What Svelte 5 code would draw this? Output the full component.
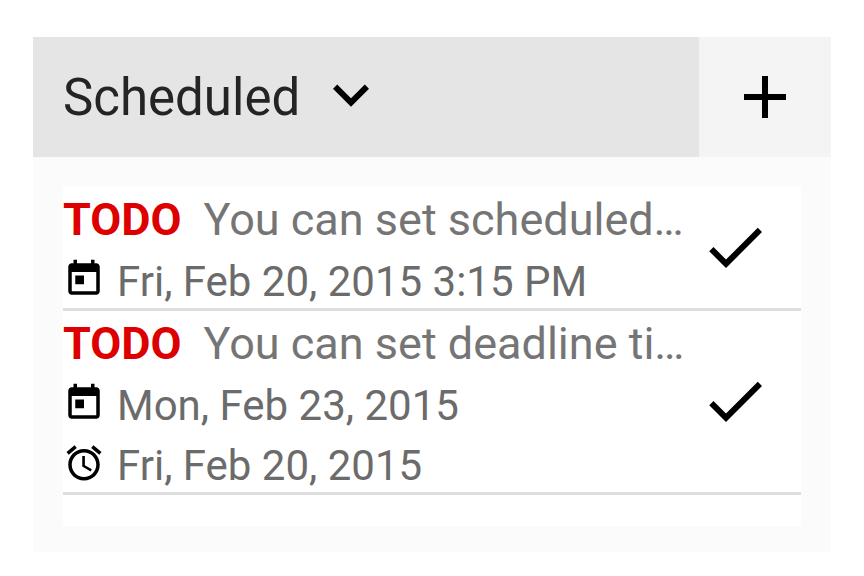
<script>
  const filters = ['Scheduled'];
  let filter = $state(filters[0]);

  const tasks = [
    {
      state: 'TODO',
      title: 'You can set scheduled…',
      times: [{ kind: 'scheduled', text: 'Fri, Feb 20, 2015 3:15 PM' }]
    },
    {
      state: 'TODO',
      title: 'You can set deadline ti…',
      times: [
        { kind: 'scheduled', text: 'Mon, Feb 23, 2015' },
        { kind: 'deadline', text: 'Fri, Feb 20, 2015' }
      ]
    }
  ];

  const timeIcons = {
    scheduled:
      'M19 3h-1V1h-2v2H8V1H6v2H5c-1.11 0-1.99.9-1.99 2L3 19c0 1.1.89 2 2 2h14c1.1 0 2-.9 2-2V5c0-1.1-.9-2-2-2zm0 16H5V8h14v11zM7 10h5v5H7z',
    deadline:
      'M22 5.72l-4.6-3.86-1.29 1.53 4.6 3.86L22 5.72zM7.88 3.39L6.6 1.86 2 5.71l1.29 1.53 4.59-3.85zM12.5 8H11v6l4.75 2.85.75-1.23-4-2.37V8zM12 4c-4.97 0-9 4.03-9 9s4.02 9 9 9c4.97 0 9-4.03 9-9s-4.03-9-9-9zm0 16c-3.87 0-7-3.13-7-7s3.13-7 7-7 7 3.13 7 7-3.13 7-7 7z'
  };
</script>

<main class="widget">
  <header class="bar">
    <div class="picker">
      <select class="filter" aria-label="Filter" bind:value={filter}>
        {#each filters as name}
          <option value={name}>{name}</option>
        {/each}
      </select>
      <svg class="icon" viewBox="0 0 24 24" aria-hidden="true">
        <path d="M7.41 7.84L12 12.42l4.59-4.58L18 9.25l-6 6-6-6z" />
      </svg>
    </div>
    <button class="add" aria-label="New note">
      <svg class="icon" viewBox="0 0 24 24" aria-hidden="true">
        <path d="M19 13h-6v6h-2v-6H5v-2h6V5h2v6h6v2z" />
      </svg>
    </button>
  </header>

  <ul class="list">
    {#each tasks as task}
      <li class="task">
        <div class="body">
          <div class="title"><strong class="state">{task.state}</strong>{task.title}</div>
          {#each task.times as time}
            <div class="time">
              <svg class="small" viewBox="0 0 24 24" aria-hidden="true">
                <path d={timeIcons[time.kind]} />
              </svg>
              <span>{time.text}</span>
            </div>
          {/each}
        </div>
        <button class="done" aria-label="Mark as done">
          <svg class="icon" viewBox="0 0 24 24" aria-hidden="true">
            <path d="M9 16.17L4.83 12l-1.42 1.41L9 19 21 7l-1.41-1.41z" />
          </svg>
        </button>
      </li>
    {/each}
  </ul>
</main>

<style>
  :global(body) {
    margin: 0;
    background: #fff;
  }

  .widget {
    margin: 37px 33px 24px;
    padding-bottom: 26px;
    background: #fbfbfb;
    font-family: Roboto, sans-serif;
  }

  button {
    border: 0;
    padding: 0;
    background: none;
    cursor: pointer;
  }

  .bar {
    display: flex;
    height: 120px;
  }

  .picker {
    flex: 1;
    min-width: 0;
    display: flex;
    align-items: center;
    gap: 14px;
    padding-left: 30px;
    background: #e5e5e5;
  }

  .filter {
    appearance: none;
    border: 0;
    padding: 0;
    background: none;
    color: #242424;
    font-family: inherit;
    font-size: 51px;
  }

  .add {
    display: flex;
    align-items: center;
    justify-content: center;
    width: 132px;
    background: #f4f4f4;
  }

  .icon {
    flex: none;
    display: block;
    width: 72px;
    height: 72px;
  }

  .list {
    list-style: none;
    margin: 30px 30px 0;
    padding: 0 0 31px;
    background: #fff;
  }

  .task {
    display: flex;
    border-bottom: 3px solid #dedede;
  }

  .body {
    flex: 1;
    min-width: 0;
    display: flex;
    flex-direction: column;
    gap: 8px;
    padding-top: 4px;
  }

  .title {
    overflow: hidden;
    white-space: nowrap;
    color: #757575;
    font-size: 45px;
    line-height: 57px;
  }

  .state {
    margin-right: 22px;
    color: #d00;
    font-weight: 700;
  }

  .time {
    display: flex;
    align-items: flex-start;
    gap: 12px;
    color: #6b6b6b;
    font-size: 42px;
    line-height: 52px;
    white-space: nowrap;
  }

  .small {
    flex: none;
    width: 42px;
    height: 42px;
    padding-top: 2px;
  }

  .done {
    display: flex;
    align-items: center;
    padding: 0 30px 1px 12px;
  }
</style>
